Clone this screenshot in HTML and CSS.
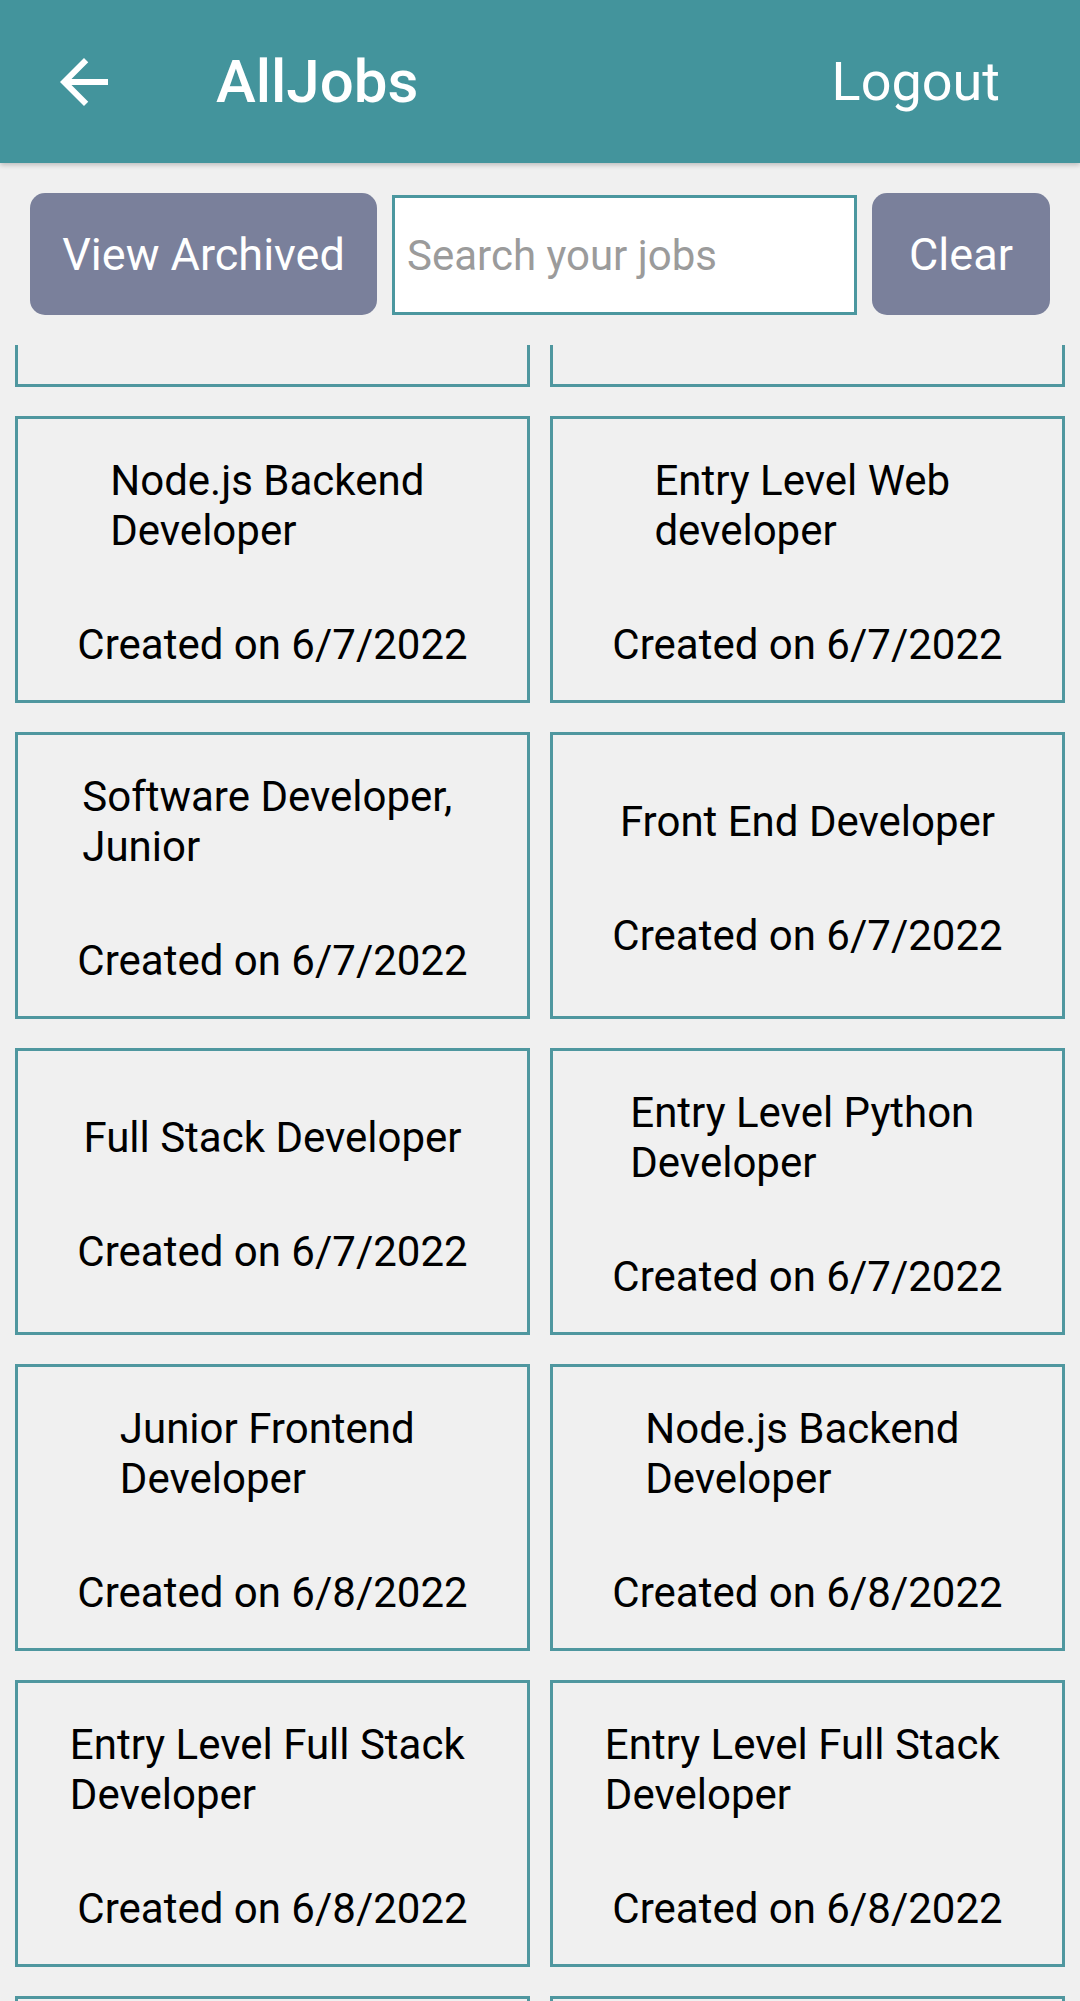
FILE: index.html
```html
<!DOCTYPE html>
<html lang="en">
<head>
<meta charset="utf-8">
<title>AllJobs</title>
<link rel="stylesheet" href="styles.css">
</head>
<body>
<header class="appbar">
  <svg class="back" viewBox="0 0 24 24" width="72" height="72" aria-hidden="true">
    <path d="M20 11H7.83l5.59-5.59L12 4l-8 8 8 8 1.41-1.41L7.83 13H20v-2z" fill="#ffffff"/>
  </svg>
  <h1 class="title">AllJobs</h1>
  <span class="logout">Logout</span>
</header>
<div class="toolbar">
  <button class="btn btn-archived">View Archived</button>
  <input class="search" type="text" placeholder="Search your jobs">
  <button class="btn btn-clear">Clear</button>
</div>
<main class="viewport">
  <div class="grid">
    <div class="card"></div>
    <div class="card"></div>

    <div class="card"><div class="job">Node.js Backend&nbsp;<br>Developer</div><div class="date">Created on 6/7/2022</div></div>
    <div class="card"><div class="job">Entry Level Web&nbsp;<br>developer</div><div class="date">Created on 6/7/2022</div></div>

    <div class="card"><div class="job">Software Developer,&nbsp;<br>Junior</div><div class="date">Created on 6/7/2022</div></div>
    <div class="card"><div class="job">Front End Developer</div><div class="date">Created on 6/7/2022</div></div>

    <div class="card"><div class="job">Full Stack Developer</div><div class="date">Created on 6/7/2022</div></div>
    <div class="card"><div class="job">Entry Level Python&nbsp;<br>Developer</div><div class="date">Created on 6/7/2022</div></div>

    <div class="card"><div class="job">Junior Frontend&nbsp;<br>Developer</div><div class="date">Created on 6/8/2022</div></div>
    <div class="card"><div class="job">Node.js Backend&nbsp;<br>Developer</div><div class="date">Created on 6/8/2022</div></div>

    <div class="card"><div class="job">Entry Level Full Stack&nbsp;<br>Developer</div><div class="date">Created on 6/8/2022</div></div>
    <div class="card"><div class="job">Entry Level Full Stack&nbsp;<br>Developer</div><div class="date">Created on 6/8/2022</div></div>

    <div class="card"></div>
    <div class="card"></div>
  </div>
</main>
</body>
</html>
```
FILE: styles.css
```css
* { box-sizing: border-box; }
html, body {
  margin: 0;
  padding: 0;
  background: #f0f0f0;
  font-family: Roboto, "Noto Sans", "Liberation Sans", sans-serif;
  color: #000;
}
body {
  width: 1080px;
  height: 2001px;
  overflow: hidden;
}
.appbar {
  position: relative;
  z-index: 2;
  height: 163px;
  background: #43949c;
  display: flex;
  align-items: center;
  padding: 0 80px 0 48px;
  box-shadow: 0 2px 5px rgba(0, 0, 0, 0.22);
}
.back {
  display: block;
  flex: none;
  margin-top: 1px;
}
.title {
  margin: 0 0 0 96px;
  font-size: 60px;
  font-weight: 500;
  color: #ffffff;
  line-height: 1;
}
.logout {
  margin-left: auto;
  font-size: 54px;
  color: #ffffff;
  line-height: 1;
}
.toolbar {
  display: flex;
  align-items: flex-end;
  gap: 15px;
  padding: 30px 30px 0;
  height: 152px;
}
.btn {
  height: 122px;
  border: none;
  border-radius: 15px;
  background: #7a809b;
  color: #ffffff;
  font-family: Roboto, "Noto Sans", "Liberation Sans", sans-serif;
  font-size: 45px;
  padding: 0;
  flex: none;
}
.btn-archived { width: 347px; }
.btn-clear { width: 178px; }
.search {
  flex: 1;
  min-width: 0;
  height: 120px;
  border: 3px solid #4b979f;
  background: #ffffff;
  padding: 0 12px;
  font-family: Roboto, "Noto Sans", "Liberation Sans", sans-serif;
  font-size: 42px;
  color: #000;
  outline: none;
  border-radius: 0;
}
.search::placeholder { color: #9b9b9b; }
.viewport {
  margin-top: 30px;
  height: 1656px;
  overflow: hidden;
}
.grid {
  display: grid;
  grid-template-columns: 515px 515px;
  column-gap: 20px;
  row-gap: 29px;
  padding: 0 15px;
  margin-top: -245px;
}
.card {
  height: 287px;
  border: 3px solid #4f979f;
  display: flex;
  flex-direction: column;
  justify-content: center;
  align-items: center;
  padding-top: 6px;
}
.job {
  font-size: 42px;
  line-height: 50px;
  text-align: left;
  white-space: nowrap;
}
.date {
  margin-top: 64px;
  font-size: 42px;
  line-height: 50px;
  white-space: nowrap;
}
```
